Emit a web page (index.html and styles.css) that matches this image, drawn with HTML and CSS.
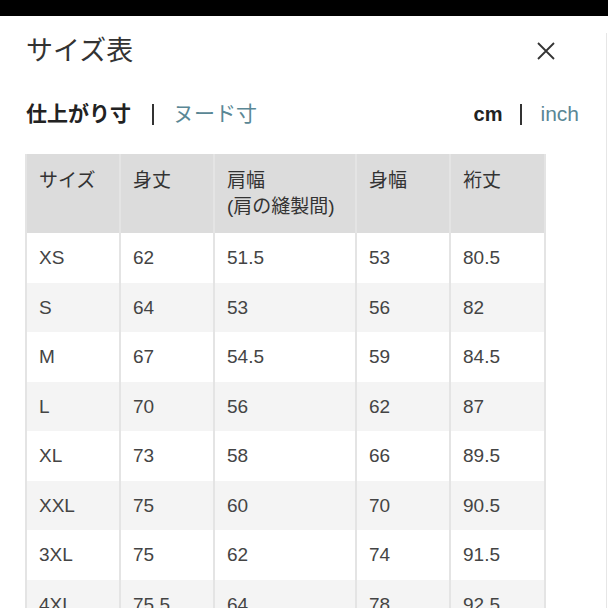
FILE: index.html
```html
<!DOCTYPE html>
<html lang="ja">
<head>
<meta charset="utf-8">
<title>サイズ表</title>
<link rel="stylesheet" href="styles.css">
</head>
<body>
<div class="topbar"></div>
<div class="modal">
  <div class="modal-head">
    <h1 class="title">サイズ表</h1>
    <button class="close" aria-label="閉じる">
      <svg width="18" height="18" viewBox="0 0 18 18"><path d="M1 1 L17 17 M17 1 L1 17" stroke="#333" stroke-width="1.8" fill="none"/></svg>
    </button>
  </div>
  <div class="tabs">
    <div class="tab-group">
      <span class="tab active">仕上がり寸</span>
      <span class="sep"></span>
      <span class="tab link">ヌード寸</span>
    </div>
    <div class="tab-group">
      <span class="unit active">cm</span>
      <span class="sep"></span>
      <span class="unit link">inch</span>
    </div>
  </div>
  <table class="size-table">
    <thead>
      <tr>
        <th class="c1">サイズ</th>
        <th class="c2">身丈</th>
        <th class="c3">肩幅<br>(肩の縫製間)</th>
        <th class="c4">身幅</th>
        <th class="c5">裄丈</th>
      </tr>
    </thead>
    <tbody>
      <tr><td>XS</td><td>62</td><td>51.5</td><td>53</td><td>80.5</td></tr>
      <tr><td>S</td><td>64</td><td>53</td><td>56</td><td>82</td></tr>
      <tr><td>M</td><td>67</td><td>54.5</td><td>59</td><td>84.5</td></tr>
      <tr><td>L</td><td>70</td><td>56</td><td>62</td><td>87</td></tr>
      <tr><td>XL</td><td>73</td><td>58</td><td>66</td><td>89.5</td></tr>
      <tr><td>XXL</td><td>75</td><td>60</td><td>70</td><td>90.5</td></tr>
      <tr><td>3XL</td><td>75</td><td>62</td><td>74</td><td>91.5</td></tr>
      <tr><td>4XL</td><td>75.5</td><td>64</td><td>78</td><td>92.5</td></tr>
    </tbody>
  </table>
</div>
</body>
</html>
```
FILE: styles.css
```css
html, body {
  margin: 0;
  padding: 0;
  overflow: hidden;
  background: #fff;
}
body {
  font-family: "Liberation Sans", "Noto Sans CJK JP", sans-serif;
  color: #333;
}
.topbar {
  height: 16px;
  background: #000;
}
.modal {
  width: 607px;
  box-sizing: border-box;
  border-right: 1px solid #e6e6e6;
  padding: 0 27px 0 25px;
}
.modal-head {
  display: flex;
  align-items: center;
  justify-content: space-between;
  margin-top: 17px;
  height: 36px;
}
.title {
  margin: 0 0 0 1px;
  font-size: 27px;
  font-weight: normal;
  line-height: 36px;
  color: #333;
}
.close {
  width: 18px;
  height: 18px;
  padding: 0;
  margin: 0 24px 0 0;
  border: none;
  background: none;
  display: flex;
}
.tabs {
  display: flex;
  justify-content: space-between;
  align-items: center;
  margin-top: 30px;
  height: 30px;
}
.tab-group {
  display: flex;
  align-items: center;
}
.tab, .unit {
  font-size: 21px;
  line-height: 30px;
}
.tab.active {
  font-weight: bold;
  margin-left: 1px;
  color: #222;
}
.unit.active {
  font-weight: bold;
  font-size: 20px;
  color: #222;
}
.link {
  color: #5a8795;
}
.sep {
  display: inline-block;
  width: 2px;
  height: 21px;
  background: #333;
  margin: 0 19px 0 21px;
}
.unit.active + .sep {
  margin: 0 18px 0 18px;
}
.size-table {
  margin-top: 25px;
  border-collapse: separate;
  border-spacing: 0;
  table-layout: fixed;
  width: 521px;
  font-size: 19px;
}
.size-table th,
.size-table td {
  box-sizing: border-box;
  border-right: 2px solid #e4e4e4;
  text-align: left;
  padding-left: 12px;
  padding-right: 4px;
}
.size-table th:first-child,
.size-table td:first-child {
  border-left: 2px solid #e4e4e4;
}
.size-table th {
  background: #dcdcdc;
  font-weight: normal;
  color: #333;
  vertical-align: top;
  line-height: 26px;
  padding-top: 14px;
  padding-bottom: 13px;
}
.size-table .c1 { width: 96px; }
.size-table .c2 { width: 94px; }
.size-table .c3 { width: 142px; }
.size-table .c4 { width: 94px; }
.size-table .c5 { width: 95px; }
.size-table td {
  color: #444;
  line-height: 25px;
  padding-top: 12px;
  padding-bottom: 12.5px;
}
.size-table tbody tr:nth-child(even) td {
  background: #f4f4f4;
}
```
